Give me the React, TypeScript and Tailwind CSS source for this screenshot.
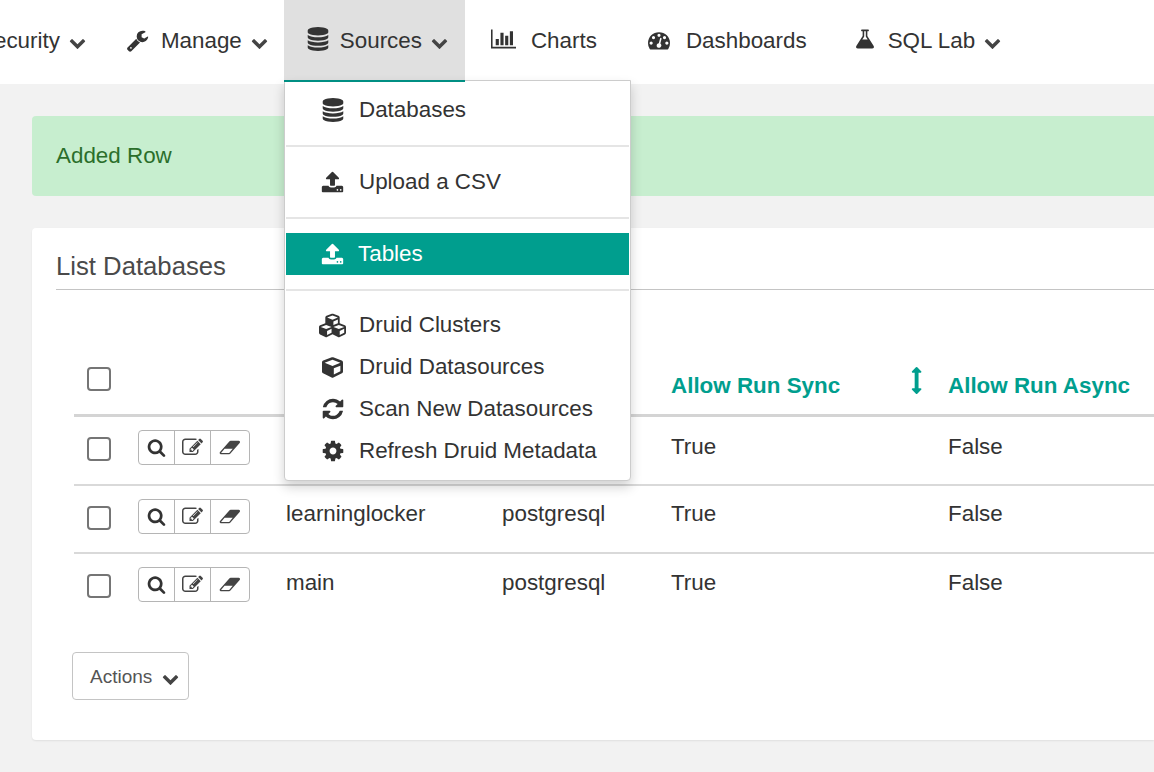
import type { ReactNode } from 'react';
import { FaCube, FaCubes } from 'react-icons/fa';

const paths = {
  chevron: 'M1683 808l-742 741q-19 19-45 19t-45-19l-742-741q-19-19-19-45.5t19-45.5l166-165q19-19 45-19t45 19l531 531 531-531q19-19 45-19t45 19l166 165q19 19 19 45.5t-19 45.5z',
  wrench: 'M448 1472q0-26-19-45t-45-19-45 19-19 45 19 45 45 19 45-19 19-45zm644-420l-682 682q-37 37-90 37-52 0-91-37l-106-108q-38-36-38-90 0-53 38-91l681-681q39 98 114.5 173.5t173.5 114.5zm634-435q0 39-23 106-47 134-164.5 217.5t-258.5 83.5q-185 0-316.5-131.5t-131.5-316.5 131.5-316.5 316.5-131.5q58 0 121.5 16.5t107.5 46.5q16 11 16 28t-16 28l-293 169v224l193 107q5-3 79-48.5t135.5-81 70.5-35.5q15 0 23.5 10t8.5 25z',
  database: 'M896 768q237 0 443-43t325-127v170q0 69-103 128t-280 93.5-385 34.5-385-34.5-280-93.5-103-128v-170q119 84 325 127t443 43zm0 768q237 0 443-43t325-127v170q0 69-103 128t-280 93.5-385 34.5-385-34.5-280-93.5-103-128v-170q119 84 325 127t443 43zm0-384q237 0 443-43t325-127v170q0 69-103 128t-280 93.5-385 34.5-385-34.5-280-93.5-103-128v-170q119 84 325 127t443 43zm0-1152q208 0 385 34.5t280 93.5 103 128v128q0 69-103 128t-280 93.5-385 34.5-385-34.5-280-93.5-103-128v-128q0-69 103-128t280-93.5 385-34.5z',
  barChart: 'M640 896v512h-256v-512h256zm384-512v1024h-256v-1024h256zm1024 1152v128h-2048v-1536h128v1408h1920zm-640-896v768h-256v-768h256zm384-384v1152h-256v-1152h256z',
  dashboard: 'M384 1152q0-53-37.5-90.5t-90.5-37.5-90.5 37.5-37.5 90.5 37.5 90.5 90.5 37.5 90.5-37.5 37.5-90.5zm192-448q0-53-37.5-90.5t-90.5-37.5-90.5 37.5-37.5 90.5 37.5 90.5 90.5 37.5 90.5-37.5 37.5-90.5zm428 481l101-382q6-26-7.5-48.5t-38.5-29.5-48 6.5-30 39.5l-101 382q-60 5-107 43.5t-63 98.5q-20 77 20 146t117 89 146-20 89-117q16-60-6-117t-72-91zm660-33q0-53-37.5-90.5t-90.5-37.5-90.5 37.5-37.5 90.5 37.5 90.5 90.5 37.5 90.5-37.5 37.5-90.5zm-640-640q0-53-37.5-90.5t-90.5-37.5-90.5 37.5-37.5 90.5 37.5 90.5 90.5 37.5 90.5-37.5 37.5-90.5zm448 192q0-53-37.5-90.5t-90.5-37.5-90.5 37.5-37.5 90.5 37.5 90.5 90.5 37.5 90.5-37.5 37.5-90.5zm320 448q0 261-141 483-19 29-54 29h-1402q-35 0-54-29-141-221-141-483 0-182 71-348t191-286 286-191 348-71 348 71 286 191 191 286 71 348z',
  flask: 'M1591 1448q56 89 21.5 152.5t-140.5 63.5h-1152q-106 0-140.5-63.5t21.5-152.5l503-793v-399h-64q-26 0-45-19t-19-45 19-45 45-19h512q26 0 45 19t19 45-19 45-45 19h-64v399zM832 256h128v436l20 31 136 222h-440l136-222 20-31z',
  upload: 'M1344 1472q0-26-19-45t-45-19-45 19-19 45 19 45 45 19 45-19 19-45zm256 0q0-26-19-45t-45-19-45 19-19 45 19 45 45 19 45-19 19-45zm128-224v320q0 40-28 68t-68 28h-1472q-40 0-68-28t-28-68v-320q0-40 28-68t68-28h427q21 56 70.5 92t110.5 36h256q61 0 110.5-36t70.5-92h427q40 0 68 28t28 68zm-325-648q-17 40-59 40h-256v448q0 26-19 45t-45 19h-256q-26 0-45-19t-19-45v-448h-256q-42 0-59-40-17-39 14-69l448-448q18-19 45-19t45 19l448 448q31 30 14 69z',
  refresh: 'M1639 1056q0 5-1 7-64 268-268 434.5t-478 166.5q-146 0-282.5-55t-243.5-157l-129 129q-19 19-45 19t-45-19-19-45v-448q0-26 19-45t45-19h448q26 0 45 19t19 45-19 45l-137 137q71 66 161 102t187 36q134 0 250-65t186-179q11-17 53-117 8-23 30-23h192q13 0 22.5 9.5t9.5 22.5zm25-800v448q0 26-19 45t-45 19h-448q-26 0-45-19t-19-45 19-45l138-138q-148-137-349-137-134 0-250 65t-186 179q-11 17-53 117-8 23-30 23h-199q-13 0-22.5-9.5t-9.5-22.5v-7q65-268 270-434.5t480-166.5q146 0 284 55.5t245 156.5l130-129q19-19 45-19t45 19 19 45z',
  cog: 'M1152 896q0-106-75-181t-181-75-181 75-75 181 75 181 181 75 181-75 75-181zm512-109v222q0 12-8 23t-20 13l-185 28q-19 54-39 91 35 50 107 138 10 12 10 25t-9 23q-27 37-99 108t-94 71q-12 0-26-9l-138-108q-44 23-91 38-16 136-29 186-7 28-36 28h-222q-14 0-24.5-8.5t-11.5-21.5l-28-184q-49-16-90-37l-141 107q-10 9-25 9-14 0-25-11-126-114-165-168-7-10-7-23 0-12 8-23 15-21 51-66.5t54-70.5q-27-50-41-99l-183-27q-13-2-21-12.5t-8-23.5v-222q0-12 8-23t19-13l186-28q14-46 39-92-40-57-107-138-10-12-10-24 0-10 9-23 26-36 98.5-107.5t94.5-71.5q13 0 26 10l138 107q44-23 91-38 16-136 29-186 7-28 36-28h222q14 0 24.5 8.5t11.5 21.5l28 184q49 16 90 37l142-107q9-9 24-9 13 0 25 10 129 119 165 170 7 8 7 22 0 12-8 23-15 21-51 66.5t-54 70.5q26 50 41 98l183 28q13 2 21 12.5t8 23.5z',
  search: 'M1216 832q0-185-131.5-316.5t-316.5-131.5-316.5 131.5-131.5 316.5 131.5 316.5 316.5 131.5 316.5-131.5 131.5-316.5zm512 832q0 52-38 90t-90 38q-54 0-90-38l-343-342q-179 124-399 124-143 0-273.5-55.5t-225-150-150-225-55.5-273.5 55.5-273.5 150-225 225-150 273.5-55.5 273.5 55.5 225 150 150 225 55.5 273.5q0 220-124 399l343 343q37 37 37 90z',
  edit: 'M888 1184l116-116-152-152-116 116v56h96v96h56zm440-720q-16-16-33 1l-350 350q-17 17-1 33t33-1l350-350q17-17 1-33zm80 594v190q0 119-84.5 203.5t-203.5 84.5h-832q-119 0-203.5-84.5t-84.5-203.5v-832q0-119 84.5-203.5t203.5-84.5h832q63 0 117 25 15 7 18 23 3 17-9 29l-49 49q-14 14-32 8-23-6-45-6h-832q-66 0-113 47t-47 113v832q0 66 47 113t113 47h832q66 0 113-47t47-113v-126q0-13 9-22l64-64q15-15 35-7t20 29zm-96-738l288 288-672 672h-288v-288zm444 132l-92 92-288-288 92-92q28-28 68-28t68 28l152 152q28 28 28 68t-28 68z',
  eraser: 'M960 1408l336-384h-768l-336 384h768zm1013-1077q15 34 9.5 71.5t-30.5 65.5l-896 1024q-38 44-96 44h-768q-38 0-69.5-20.5t-47.5-54.5q-15-34-9.5-71.5t30.5-65.5l896-1024q38-44 96-44h768q38 0 70 20.5t47 54.5z',
  arrowsV: 'M1024 320q0 26-19 45t-45 19h-128v1024h128q26 0 45 19t19 45-19 45l-256 256q-19 19-45 19t-45-19l-256-256q-19-19-19-45t19-45 45-19h128v-1024h-128q-26 0-45-19t-19-45 19-45l256-256q19-19 45-19t45 19l256 256q19 19 19 45z',
};

function Fa({ d, size, wide, className }: { d: string; size: number; wide?: boolean; className?: string }) {
  return (
    <svg
      viewBox={wide ? '0 0 2048 1792' : '0 0 1792 1792'}
      width={wide ? (size * 2048) / 1792 : size}
      height={size}
      fill="currentColor"
      fillRule="evenodd"
      className={`shrink-0 ${className ?? ''}`}
    >
      <path d={d} />
    </svg>
  );
}

function Chevron() {
  return <Fa d={paths.chevron} size={17} className="text-[#444] mt-[4px]" />;
}

function MenuItem({ icon, label, active }: { icon: ReactNode; label: string; active?: boolean }) {
  return (
    <div className={`flex items-center h-[42px] ${active ? 'bg-[#009e8e] text-white' : 'text-[#333]'}`}>
      <div className="w-[73px] pl-[20px] flex justify-center shrink-0">{icon}</div>
      <span className={active ? '-ml-[1px]' : ''}>{label}</span>
    </div>
  );
}

function Divider({ tight }: { tight?: boolean }) {
  return <div className={`h-[2px] mt-[14px] bg-[#e5e5e5] ${tight ? 'mb-[13px]' : 'mb-[14px]'}`} />;
}

function Checkbox() {
  return <div className="w-[24px] h-[24px] rounded-[4px] border-2 border-[#757575] bg-white" />;
}

function RowActions() {
  return (
    <div className="flex w-[112px] h-[35px] rounded-[4px] border border-[#b5b5b5] bg-white text-[#444] divide-x divide-[#b5b5b5]">
      <div className="w-[36px] flex items-center justify-center">
        <Fa d={paths.search} size={19} className="text-[#333]" />
      </div>
      <div className="w-[36px] flex items-center justify-center">
        <Fa d={paths.edit} size={21} />
      </div>
      <div className="flex-1 flex items-center justify-center">
        <Fa d={paths.eraser} wide size={19} />
      </div>
    </div>
  );
}

const columns = 'grid grid-cols-[64px_148px_216px_169px_277px_1fr]';

function Row({ name, backend, pad, text, last }: { name?: string; backend?: string; pad: string; text: string; last?: boolean }) {
  return (
    <div className={`${columns} ${pad} ${last ? '' : 'border-b-2 border-[#d9d9d9]'}`}>
      <div className="pl-[13px] pt-[7px]">
        <Checkbox />
      </div>
      <RowActions />
      <div className={text}>{name}</div>
      <div className={text}>{backend}</div>
      <div className={text}>True</div>
      <div className={text}>False</div>
    </div>
  );
}

export default function App() {
  return (
    <div className="relative w-[1154px] h-[772px] overflow-hidden bg-[#f2f2f2] text-[22.4px] text-[#333] font-['Liberation_Sans',sans-serif]">
      <nav className="h-[84px] bg-white flex items-start -ml-[21px] whitespace-nowrap">
        <div className="h-[80px] flex items-center">
          <span className="mr-[9px] mt-[2px]">Security</span>
          <Chevron />
        </div>
        <div className="h-[80px] flex items-center ml-[40px]">
          <Fa d={paths.wrench} size={23} className="mr-[12px]" />
          <span className="mr-[9px] mt-[2px]">Manage</span>
          <Chevron />
        </div>
        <div className="h-[80px] w-[181px] ml-[16px] pl-[22px] flex items-center bg-[#e0e0e0]">
          <Fa d={paths.database} size={24} className="mr-[10px] -mt-[2px]" />
          <span className="mr-[9px] mt-[2px]">Sources</span>
          <Chevron />
        </div>
        <div className="h-[80px] flex items-center ml-[26px]">
          <Fa d={paths.barChart} wide size={22} className="mr-[15px] -mt-[2px]" />
          <span className="mt-[2px]">Charts</span>
        </div>
        <div className="h-[80px] flex items-center ml-[51px]">
          <Fa d={paths.dashboard} size={22} className="mr-[16px]" />
          <span className="mt-[2px]">Dashboards</span>
        </div>
        <div className="h-[80px] flex items-center ml-[47px]">
          <Fa d={paths.flask} size={22} className="mr-[12px] -mt-[2px]" />
          <span className="mr-[9px] mt-[2px]">SQL Lab</span>
          <Chevron />
        </div>
      </nav>

      <main className="pl-[32px] pt-[32px]">
        <div className="h-[80px] pl-[24px] flex items-center bg-[#c7eecf] text-[#2b6e2b] rounded-l-[4px]">Added Row</div>

        <section className="mt-[32px] h-[512px] bg-white rounded-l-[4px] shadow-[0_1px_2px_rgba(0,0,0,0.08)] pl-[24px] pt-[22px]">
          <h2 className="text-[25.7px] leading-[32px] h-[40px] border-b border-[#c4c4c4] font-normal text-[#4a4a4a]">List Databases</h2>

          <div className="ml-[18px] mt-[77px]">
            <div className={`${columns} h-[50px] border-b-[3px] border-[#d4d4d4] font-bold text-[#009e8e]`}>
              <div className="pl-[13px]">
                <Checkbox />
              </div>
              <div />
              <div />
              <div />
              <div className="relative pt-[1px] leading-[36px]">
                Allow Run Sync
                <Fa d={paths.arrowsV} size={27} className="absolute left-[235px] top-0" />
              </div>
              <div className="pt-[1px] leading-[36px]">Allow Run Async</div>
            </div>
            <Row pad="pt-[13px] h-[69px]" text="leading-[34px]" />
            <Row name="learninglocker" backend="postgresql" pad="pt-[13px] h-[68px]" text="leading-[30px]" />
            <Row name="main" backend="postgresql" pad="pt-[13px] h-[66px]" text="leading-[32px]" last />
          </div>

          <button className="mt-[32px] ml-[16px] w-[117px] h-[48px] pl-[17px] pt-[2px] flex items-center gap-[10px] bg-white border border-[#c4c4c4] rounded-[4px] text-[19px] text-[#555]">
            Actions
            <Fa d={paths.chevron} size={17} className="text-[#444] mt-[3px]" />
          </button>
        </section>
      </main>

      <div className="absolute left-[284px] top-[80px] w-[347px] h-[401px] bg-white border border-[#ccc] rounded-b-[4px] shadow-[0_6px_12px_rgba(0,0,0,0.18)] px-[1px] py-[8px]">
        <div className="absolute -left-px -top-px w-[181px] h-[2px] bg-[#008f83]" />
        <MenuItem icon={<Fa d={paths.database} size={24} />} label="Databases" />
        <Divider />
        <MenuItem icon={<Fa d={paths.upload} size={23} />} label="Upload a CSV" />
        <Divider />
        <MenuItem icon={<Fa d={paths.upload} size={23} />} label="Tables" active />
        <Divider tight />
        <MenuItem icon={<FaCubes size={27} />} label="Druid Clusters" />
        <MenuItem icon={<FaCube size={21} />} label="Druid Datasources" />
        <MenuItem icon={<Fa d={paths.refresh} size={24} />} label="Scan New Datasources" />
        <MenuItem icon={<Fa d={paths.cog} size={24} />} label="Refresh Druid Metadata" />
      </div>
    </div>
  );
}
